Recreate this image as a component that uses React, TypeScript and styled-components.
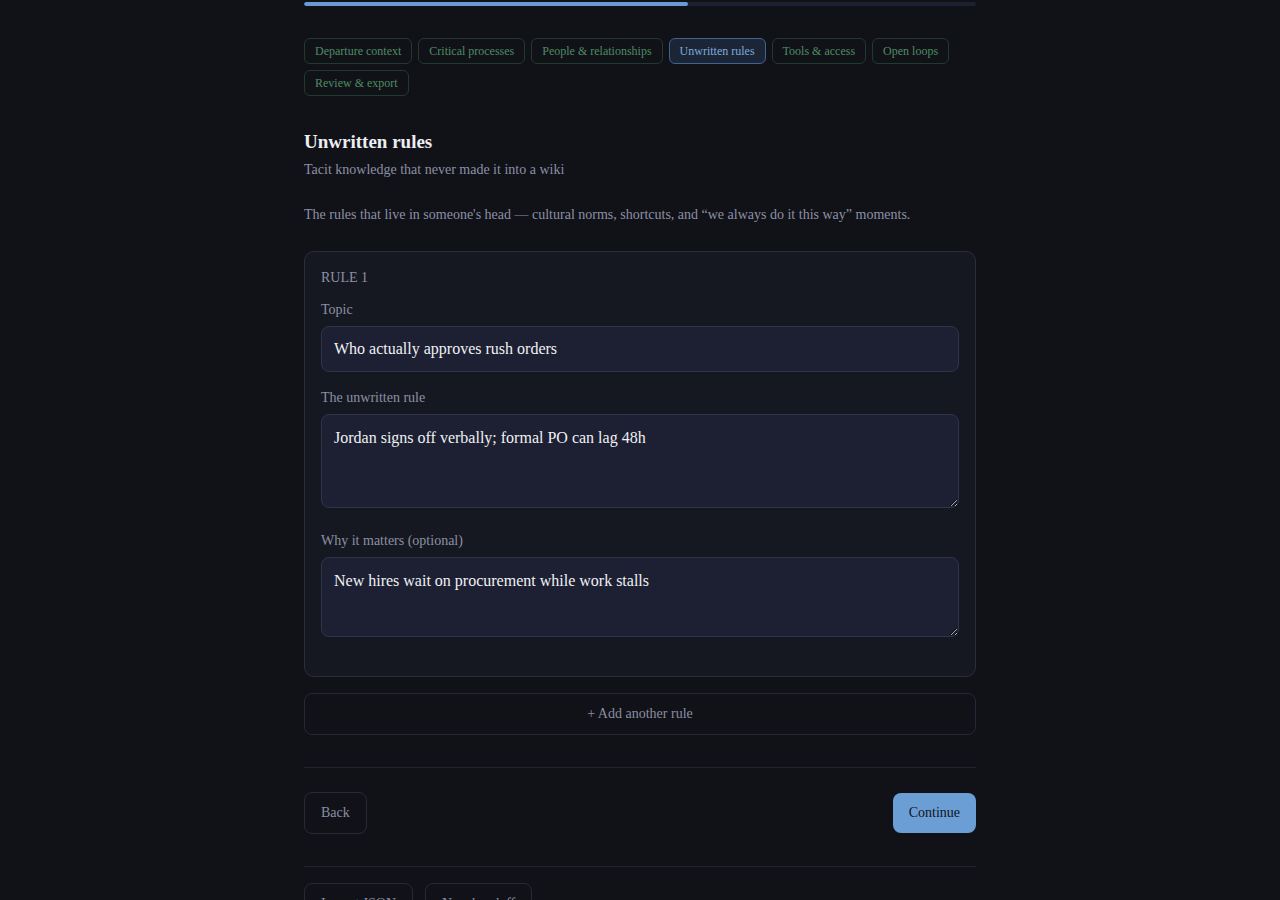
import { createGlobalStyle, styled } from 'styled-components';

const GlobalStyle = createGlobalStyle`
  html, body {
    margin: 0;
    padding: 0;
    background: #111218;
  }
  body {
    font-family: "Liberation Serif", "Times New Roman", serif;
    color: #e8e9ee;
  }
  * { box-sizing: border-box; }
`;

const Page = styled.main`
  width: 672px;
  margin: 0 auto;
  padding-top: 2px;
`;

const Track = styled.div`
  height: 4px;
  border-radius: 2px;
  background: #1d2030;
  overflow: hidden;
`;

const Fill = styled.div`
  height: 100%;
  background: #6a9bd3;
  border-radius: 2px;
`;

const Steps = styled.nav`
  display: flex;
  flex-wrap: wrap;
  gap: 6px 6px;
  margin-top: 32px;
`;

const Step = styled.button<{ $active?: boolean }>`
  font-family: inherit;
  font-size: 12px;
  line-height: 14px;
  padding: 5px 10px;
  border-radius: 6px;
  cursor: pointer;
  border: 1px solid ${(p) => (p.$active ? '#3d6493' : '#203a2d')};
  background: ${(p) => (p.$active ? '#1b2536' : 'transparent')};
  color: ${(p) => (p.$active ? '#7eaadc' : '#4c8d63')};
`;

const Title = styled.h2`
  font-size: 19px;
  font-weight: 700;
  line-height: 22px;
  margin: 35px 0 0;
  color: #eceef3;
`;

const Subtitle = styled.p`
  font-size: 14px;
  line-height: 16px;
  margin: 9px 0 0;
  color: #8c90a4;
`;

const Intro = styled.p`
  font-size: 14px;
  line-height: 16px;
  margin: 29px 0 0;
  color: #8c90a4;
`;

const Card = styled.section`
  margin-top: 28px;
  padding: 18px 16px 21px;
  background: #161821;
  border: 1px solid #2a2d3b;
  border-radius: 10px;
`;

const CardHeading = styled.div`
  font-size: 14px;
  line-height: 16px;
  color: #8c90a4;
  margin-bottom: 16px;
`;

const Field = styled.label<{ $gap?: number }>`
  display: block;
  margin-bottom: ${(p) => p.$gap ?? 18}px;
`;

const Label = styled.span`
  display: block;
  font-size: 14px;
  line-height: 16px;
  color: #8c90a4;
  margin-bottom: 8px;
`;

const Input = styled.input`
  display: block;
  width: 100%;
  height: 46px;
  padding: 12px 12px;
  font-family: inherit;
  font-size: 16px;
  color: #f0f1f5;
  background: #1d2032;
  border: 1px solid #30344a;
  border-radius: 8px;
  outline: none;
`;

const TextArea = styled.textarea<{ $h: number }>`
  display: block;
  width: 100%;
  height: ${(p) => p.$h}px;
  padding: 13px 12px 12px;
  font-family: inherit;
  font-size: 16px;
  line-height: 20px;
  color: #f0f1f5;
  background: #1d2032;
  border: 1px solid #30344a;
  border-radius: 8px;
  outline: none;
  resize: vertical;
`;

const AddButton = styled.button`
  display: block;
  width: 100%;
  height: 42px;
  margin-top: 16px;
  font-family: inherit;
  font-size: 14px;
  color: #8a8ea2;
  background: transparent;
  border: 1px solid #252836;
  border-radius: 8px;
  cursor: pointer;
`;

const Divider = styled.hr<{ $top: number }>`
  border: none;
  border-top: 1px solid #22252e;
  margin: ${(p) => p.$top}px 0 0;
`;

const Actions = styled.div`
  display: flex;
  justify-content: space-between;
  align-items: center;
  margin-top: 24px;
`;

const GhostButton = styled.button`
  height: 42px;
  padding: 0 16px;
  font-family: inherit;
  font-size: 14px;
  color: #8a8ea2;
  background: transparent;
  border: 1px solid #272a35;
  border-radius: 8px;
  cursor: pointer;
`;

const PrimaryButton = styled.button`
  height: 40px;
  padding: 0 16px;
  font-family: inherit;
  font-size: 14px;
  color: #12141a;
  background: #6b9ed5;
  border: none;
  border-radius: 8px;
  cursor: pointer;
`;

const Tools = styled.div`
  display: flex;
  gap: 12px;
  margin-top: 16px;
  padding-bottom: 24px;
`;

const steps = [
  'Departure context',
  'Critical processes',
  'People & relationships',
  'Unwritten rules',
  'Tools & access',
  'Open loops',
  'Review & export',
];

export default function App(): JSX.Element {
  const current = 3;
  return (
    <>
      <GlobalStyle />
      <Page>
        <Track>
          <Fill style={{ width: `${((current + 1) / steps.length) * 100}%` }} />
        </Track>
        <Steps>
          {steps.map((s, i) => (
            <Step key={s} $active={i === current}>
              {s}
            </Step>
          ))}
        </Steps>

        <Title>Unwritten rules</Title>
        <Subtitle>Tacit knowledge that never made it into a wiki</Subtitle>
        <Intro>
          The rules that live in someone's head — cultural norms, shortcuts, and
          “we always do it this way” moments.
        </Intro>

        <Card>
          <CardHeading>RULE 1</CardHeading>
          <Field>
            <Label>Topic</Label>
            <Input defaultValue="Who actually approves rush orders" />
          </Field>
          <Field $gap={25}>
            <Label>The unwritten rule</Label>
            <TextArea $h={94} defaultValue="Jordan signs off verbally; formal PO can lag 48h" />
          </Field>
          <Field>
            <Label>Why it matters (optional)</Label>
            <TextArea $h={80} defaultValue="New hires wait on procurement while work stalls" />
          </Field>
        </Card>

        <AddButton>+ Add another rule</AddButton>

        <Divider $top={32} />
        <Actions>
          <GhostButton>Back</GhostButton>
          <PrimaryButton>Continue</PrimaryButton>
        </Actions>
        <Divider $top={32} />
        <Tools>
          <GhostButton>Import JSON</GhostButton>
          <GhostButton>New handoff</GhostButton>
        </Tools>
      </Page>
    </>
  );
}
